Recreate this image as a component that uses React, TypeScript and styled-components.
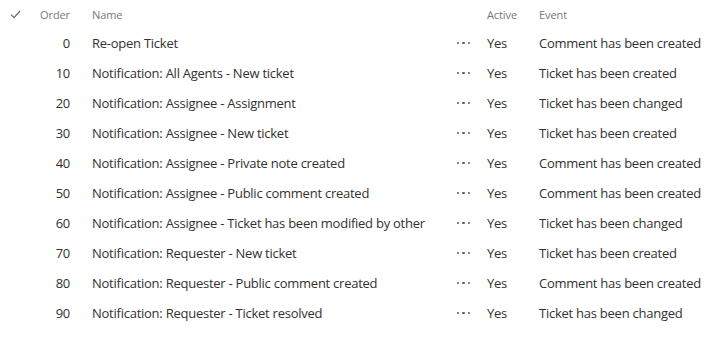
import React from "react";
import styled, { createGlobalStyle } from "styled-components";

const Global = createGlobalStyle`
  html, body { margin: 0; padding: 0; background: #ffffff; }
  body { font-family: "Open Sans", "Noto Sans", sans-serif; }
`;

type Rule = { order: number; name: string; active: string; event: string };

const rules: Rule[] = [
  { order: 0, name: "Re-open Ticket", active: "Yes", event: "Comment has been created" },
  { order: 10, name: "Notification: All Agents - New ticket", active: "Yes", event: "Ticket has been created" },
  { order: 20, name: "Notification: Assignee - Assignment", active: "Yes", event: "Ticket has been changed" },
  { order: 30, name: "Notification: Assignee - New ticket", active: "Yes", event: "Ticket has been created" },
  { order: 40, name: "Notification: Assignee - Private note created", active: "Yes", event: "Comment has been created" },
  { order: 50, name: "Notification: Assignee - Public comment created", active: "Yes", event: "Comment has been created" },
  { order: 60, name: "Notification: Assignee - Ticket has been modified by other", active: "Yes", event: "Ticket has been changed" },
  { order: 70, name: "Notification: Requester - New ticket", active: "Yes", event: "Ticket has been created" },
  { order: 80, name: "Notification: Requester - Public comment created", active: "Yes", event: "Comment has been created" },
  { order: 90, name: "Notification: Requester - Ticket resolved", active: "Yes", event: "Ticket has been changed" },
];

const List = styled.div`
  display: flex;
  flex-direction: column;
  width: 723px;
`;

const Row = styled.div<{ $header?: boolean }>`
  display: grid;
  grid-template-columns: 32px 38px 372px 41px 52px 1fr;
  align-items: center;
  height: ${(p) => (p.$header ? "28px" : "30px")};
  font-size: ${(p) => (p.$header ? "11px" : "13px")};
  letter-spacing: ${(p) => (p.$header ? "-0.1px" : "-0.25px")};
  color: ${(p) => (p.$header ? "#7a7876" : "#323130")};
`;

const CheckCell = styled.div`
  display: flex;
  justify-content: center;
  padding-right: 2px;
`;

const OrderCell = styled.div`
  text-align: right;
`;

const TextCell = styled.div<{ $pad: number }>`
  padding-left: ${(p) => p.$pad}px;
  white-space: nowrap;
`;

const MoreCell = styled.div`
  display: flex;
  justify-content: center;
  align-items: center;
  gap: 3px;
  padding-left: 2px;
`;

const Dot = styled.span`
  width: 2.5px;
  height: 2.5px;
  border-radius: 50%;
  background: #5f5f5f;
`;

const Check = () => (
  <svg width="11" height="9" viewBox="0 0 11 9">
    <path d="M1 4.6 L4 7.6 L10 1" fill="none" stroke="#6f6d6b" strokeWidth="1.3" />
  </svg>
);

export default function App() {
  return (
    <>
      <Global />
      <List>
        <Row $header>
          <CheckCell>
            <Check />
          </CheckCell>
          <OrderCell>Order</OrderCell>
          <TextCell $pad={22}>Name</TextCell>
          <div />
          <TextCell $pad={4}>Active</TextCell>
          <TextCell $pad={4}>Event</TextCell>
        </Row>
        {rules.map((r) => (
          <Row key={r.order}>
            <div />
            <OrderCell>{r.order}</OrderCell>
            <TextCell $pad={22}>{r.name}</TextCell>
            <MoreCell>
              <Dot />
              <Dot />
              <Dot />
            </MoreCell>
            <TextCell $pad={4}>{r.active}</TextCell>
            <TextCell $pad={4}>{r.event}</TextCell>
          </Row>
        ))}
      </List>
    </>
  );
}
